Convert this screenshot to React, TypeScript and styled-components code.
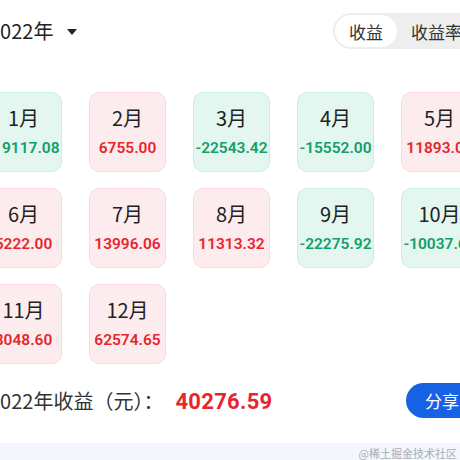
import React from 'react'
import styled, { createGlobalStyle } from 'styled-components'

const GlobalStyle = createGlobalStyle`
  html, body {
    margin: 0;
    padding: 0;
    background: #ffffff;
  }
  body {
    font-family: "Noto Sans CJK SC", "Noto Sans", sans-serif;
    color: #222222;
  }
`

const Viewport = styled.div`
  width: 460px;
  height: 460px;
  overflow: hidden;
  position: relative;
`

const Page = styled.div`
  width: 493px;
  margin-left: -15px;
  padding-top: 13px;
`

const Header = styled.div`
  display: flex;
  align-items: center;
  justify-content: space-between;
  height: 36px;
  padding-left: 4px;
`

const YearPicker = styled.div`
  display: flex;
  align-items: center;
  gap: 14px;
  font-size: 20px;
  line-height: 24px;
  color: #222222;
`

const Caret = styled.span`
  width: 0;
  height: 0;
  border-left: 5px solid transparent;
  border-right: 5px solid transparent;
  border-top: 6px solid #222222;
  margin-top: 1px;
`

const Toggle = styled.div`
  display: flex;
  align-items: center;
  height: 36px;
  padding: 2px;
  box-sizing: border-box;
  border-radius: 18px;
  background: #eeeeee;
`

const Tab = styled.div<{ $active?: boolean }>`
  height: 32px;
  padding: 0 14px;
  display: flex;
  align-items: center;
  border-radius: 16px;
  font-size: 17px;
  color: #333333;
  background: ${(p) => (p.$active ? '#ffffff' : 'transparent')};
`

const Grid = styled.div`
  display: grid;
  grid-template-columns: repeat(5, 77px);
  grid-auto-rows: 80px;
  column-gap: 27px;
  row-gap: 16px;
  margin-top: 43px;
`

const Card = styled.div<{ $up: boolean }>`
  box-sizing: border-box;
  border-radius: 10px;
  border: 1px solid ${(p) => (p.$up ? '#fbd9dc' : '#cbeede')};
  background: ${(p) => (p.$up ? '#fdecee' : '#e3f6ef')};
  display: flex;
  flex-direction: column;
  align-items: center;
  justify-content: center;
  gap: 8px;
  white-space: nowrap;
`

const Month = styled.div`
  font-size: 20px;
  line-height: 24px;
  color: #222222;
`

const Value = styled.div<{ $up: boolean }>`
  font-family: Roboto, "Noto Sans", sans-serif;
  font-weight: 600;
  font-size: 15.5px;
  line-height: 20px;
  color: ${(p) => (p.$up ? '#e5262f' : '#119f69')};
`

const Footer = styled.div`
  display: flex;
  align-items: center;
  justify-content: space-between;
  height: 35px;
  margin-top: 19px;
  padding-left: 4px;
`

const Total = styled.div`
  display: flex;
  align-items: baseline;
  font-size: 20px;
  color: #333333;
  white-space: nowrap;
`

const TotalValue = styled.span`
  font-family: Roboto, "Noto Sans", sans-serif;
  font-weight: 700;
  font-size: 22px;
  letter-spacing: 0.3px;
  margin-left: 12px;
  color: #e5262f;
`

const ShareButton = styled.div`
  height: 35px;
  width: 72px;
  border-radius: 18px;
  background: #1761e4;
  color: #ffffff;
  font-size: 17px;
  display: flex;
  align-items: center;
  padding-left: 19px;
  box-sizing: border-box;
`

const Strip = styled.div`
  position: absolute;
  left: 0;
  right: 0;
  top: 443px;
  bottom: 0;
  background: #f3f6fc;
  display: flex;
  justify-content: flex-end;
  align-items: center;
  padding-right: 3px;
  padding-top: 2px;
`

const Watermark = styled.span`
  font-size: 11px;
  color: #a9adb5;
`

const months = [
  { m: '1月', v: '-19117.08' },
  { m: '2月', v: '6755.00' },
  { m: '3月', v: '-22543.42' },
  { m: '4月', v: '-15552.00' },
  { m: '5月', v: '11893.00' },
  { m: '6月', v: '5222.00' },
  { m: '7月', v: '13996.06' },
  { m: '8月', v: '11313.32' },
  { m: '9月', v: '-22275.92' },
  { m: '10月', v: '-10037.60' },
  { m: '11月', v: '8048.60' },
  { m: '12月', v: '62574.65' },
]

export default function App() {
  return (
    <Viewport>
      <GlobalStyle />
      <Page>
        <Header>
          <YearPicker>
            <span>2022年</span>
            <Caret />
          </YearPicker>
          <Toggle>
            <Tab $active>收益</Tab>
            <Tab>收益率</Tab>
          </Toggle>
        </Header>
        <Grid>
          {months.map((item) => {
            const up = !item.v.startsWith('-')
            return (
              <Card key={item.m} $up={up}>
                <Month>{item.m}</Month>
                <Value $up={up}>{item.v}</Value>
              </Card>
            )
          })}
        </Grid>
        <Footer>
          <Total>
            2022年收益（元）：<TotalValue>40276.59</TotalValue>
          </Total>
          <ShareButton>分享</ShareButton>
        </Footer>
      </Page>
      <Strip>
        <Watermark>@稀土掘金技术社区</Watermark>
      </Strip>
    </Viewport>
  )
}
